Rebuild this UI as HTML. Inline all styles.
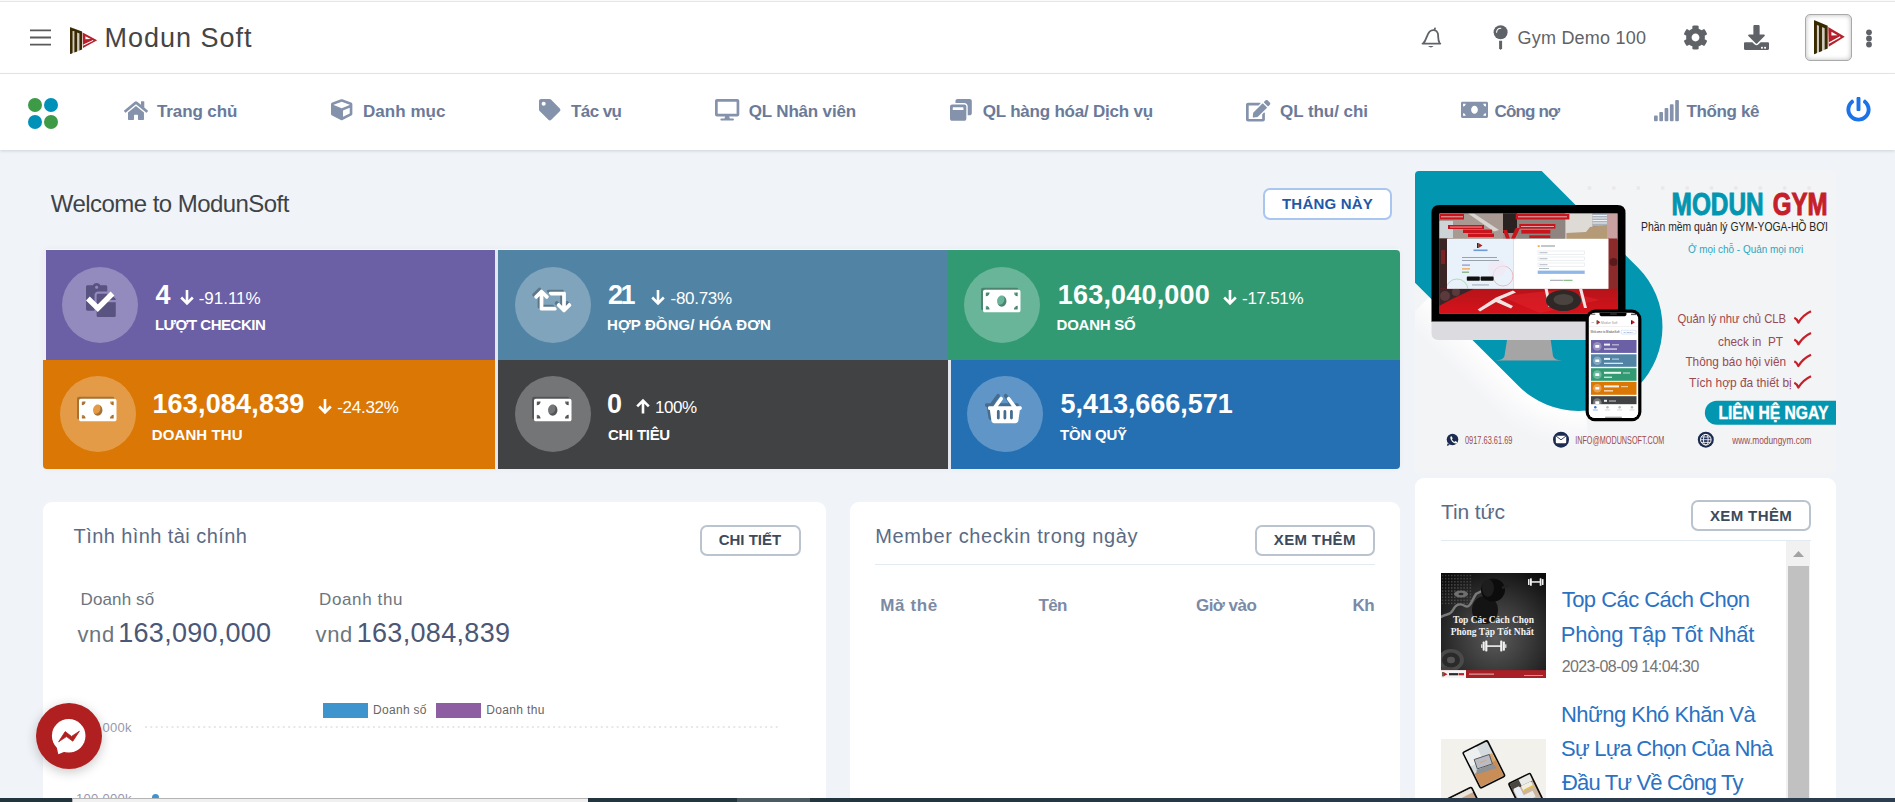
<!DOCTYPE html>
<html lang="vi">
<head>
<meta charset="utf-8">
<title>Modun Soft</title>
<style>
*{box-sizing:border-box;margin:0;padding:0}
html,body{width:1895px;height:802px;overflow:hidden}
body{position:relative;background:#f0f4f8;font-family:"Liberation Sans",Arial,sans-serif;color:#333}
.abs,.t{position:absolute}
.t{white-space:nowrap;display:block}
svg{position:absolute;overflow:visible}
header.topbar{position:absolute;left:0;top:0;width:1895px;height:74px;background:#fff;border-bottom:1px solid #e6e9ee}
header.topbar:before{content:"";position:absolute;left:0;top:0;width:100%;height:2px;background:linear-gradient(#fafafa 50%,#e6e6e6 50%)}
nav.menubar{position:absolute;left:0;top:74px;width:1895px;height:76px;background:#fff;box-shadow:0 1px 3px rgba(100,120,135,.26)}
.card{position:absolute;color:#fff}
.circle{position:absolute;width:76px;height:76px;border-radius:50%;background:rgba(255,255,255,.27)}
.panel{position:absolute;background:#fff;border-radius:9px}
.btn{position:absolute;height:31px;border:2px solid #b9c4ce;border-radius:7px;background:#fff}
.hr{position:absolute;height:1px;background:#e2eaf2}

</style>
</head>
<body>
<header class="topbar"><svg style="left:30px;top:29px" width="21" height="17" viewBox="0 0 21 17"><path d="M0 1.4h21M0 8.5h21M0 15.6h21" stroke="#5a5a5a" stroke-width="1.9" fill="none"/></svg><svg style="left:69.6px;top:27.0px" width="27.4" height="27.2" viewBox="0 0 27.4 27.2" preserveAspectRatio="none"><path fill="#cfcbc0" d="M2.5 4L9.6 6.5V23.5L2.5 26z"/><path fill="#3a2a02" d="M0 1.1Q0 0 1 .4L2.600 1V26L1 26.900Q0 27.300 0 26.200zM4.400 3.200L7.100 4.200V24.400L4.400 25.400zM9.400 5L12.100 6V22.400L9.400 23.500zM.5.200L12.100 4.500V7.400L.5 3.100z"/><path fill="#b5202a" d="M12.600 5.500L27.200 13.200 13 21.100z"/><path fill="#fff" d="M15.400 9.300L20.800 12 15.400 12.300zM13.300 18.700L23.400 13.700 23 12.900 13.300 17.600z"/></svg><svg style="left:1422px;top:27.5px" width="19" height="20.5" viewBox="0 0 19 20.5"><path d="M1.300 15.200C4.600 12.400 4.600 6.400 7.600 3.600 10.300 1.200 14.700 1.800 15.800 5.300 16.700 8.400 15.500 12 17.600 15.100M.5 15.600H18.300M12.600 2.300L13 .4" stroke="#5f6368" stroke-width="1.800" fill="none" stroke-linecap="round" stroke-linejoin="round"/><path d="M6 18q3 2.800 5.600 0z" fill="#5f6368"/></svg><svg style="left:1493px;top:25px" width="15" height="25" viewBox="0 0 15 25"><circle cx="7.600" cy="7.200" r="7" fill="#5f6368"/><path d="M3.600 7.300A4.300 4.300 0 0 1 7.800 3.200" stroke="#fff" stroke-width="1.100" fill="none" stroke-linecap="round"/><path d="M6.100 15.700h3v7.600l-1.500 1.600-1.500-1.600z" fill="#5f6368"/></svg><svg style="left:1682.7px;top:25.2px;" width="25.00" height="25" viewBox="0 0 512 512"><path fill="#5f6368" d="M487.4 315.7l-42.6-24.6c4.3-23.2 4.3-47 0-70.2l42.6-24.6c4.9-2.8 7.1-8.6 5.5-14-11.1-35.6-30-67.8-54.700-94.600-3.800-4.100-10-5.100-14.800-2.300L380.800 110c-17.900-15.400-38.500-27.300-60.800-35.100V25.800c0-5.600-3.900-10.500-9.400-11.700-36.700-8.200-74.300-7.800-109.200 0-5.500 1.200-9.400 6.100-9.400 11.700V75c-22.200 7.900-42.800 19.800-60.800 35.100L88.700 85.500c-4.900-2.800-11-1.900-14.800 2.300-24.700 26.700-43.600 58.900-54.700 94.600-1.700 5.400.6 11.200 5.500 14L67.300 221c-4.300 23.200-4.300 47 0 70.200l-42.600 24.600c-4.900 2.800-7.100 8.600-5.500 14 11.100 35.600 30 67.800 54.700 94.600 3.800 4.100 10 5.100 14.800 2.300l42.600-24.600c17.900 15.400 38.500 27.300 60.800 35.100v49.200c0 5.600 3.900 10.500 9.400 11.700 36.700 8.200 74.300 7.800 109.200 0 5.500-1.200 9.400-6.100 9.400-11.700v-49.200c22.200-7.900 42.800-19.800 60.800-35.100l42.600 24.600c4.900 2.800 11 1.900 14.800-2.300 24.700-26.700 43.600-58.900 54.700-94.600 1.500-5.500-.7-11.300-5.600-14.100zM256 336c-44.100 0-80-35.900-80-80s35.900-80 80-80 80 35.900 80 80-35.900 80-80 80z"/></svg><svg style="left:1743.5px;top:25.0px;" width="25.00" height="25" viewBox="0 0 512 512"><path fill="#5f6368" d="M216 0h80c13.300 0 24 10.700 24 24v168h87.700c17.800 0 26.700 21.500 14.100 34.100L269.700 378.300c-7.500 7.500-19.800 7.500-27.300 0L90.100 226.100c-12.600-12.600-3.700-34.100 14.100-34.100H192V24c0-13.300 10.700-24 24-24zm296 376v112c0 13.300-10.700 24-24 24H24c-13.300 0-24-10.700-24-24V376c0-13.300 10.700-24 24-24h146.700l49 49c20.100 20.100 52.500 20.100 72.600 0l49-49H488c13.300 0 24 10.700 24 24zm-124 88c0-11-9-20-20-20s-20 9-20 20 9 20 20 20 20-9 20-20zm64 0c0-11-9-20-20-20s-20 9-20 20 9 20 20 20 20-9 20-20z"/></svg><div class="abs" style="left:1805px;top:14px;width:47px;height:47px;border:1px solid #a9a9a9;border-radius:5px;background:#fff;box-shadow:inset 0 0 5px rgba(0,0,0,.28)"></div><svg style="left:1813.8px;top:19.8px" width="31.0" height="34.5" viewBox="0 0 27.4 27.2" preserveAspectRatio="none"><path fill="#cfcbc0" d="M2.5 4L9.6 6.5V23.5L2.5 26z"/><path fill="#3a2a02" d="M0 1.1Q0 0 1 .4L2.600 1V26L1 26.900Q0 27.300 0 26.200zM4.400 3.200L7.100 4.200V24.400L4.400 25.400zM9.400 5L12.100 6V22.400L9.400 23.500zM.5.200L12.100 4.500V7.400L.5 3.100z"/><path fill="#b5202a" d="M12.600 5.500L27.200 13.200 13 21.100z"/><path fill="#fff" d="M15.400 9.300L20.800 12 15.400 12.300zM13.300 18.700L23.400 13.700 23 12.900 13.300 17.600z"/></svg><svg style="left:1866px;top:29px" width="6" height="19" viewBox="0 0 6 19"><circle cx="3" cy="3.300" r="2.900" fill="#5f6368"/><circle cx="3" cy="9.400" r="2.900" fill="#5f6368"/><circle cx="3" cy="15.500" r="2.900" fill="#5f6368"/></svg><h1 class="t" style="left:104.5px;top:25px;font-size:27px;line-height:27px;font-weight:400;color:#454545;letter-spacing:0.99px;">Modun Soft</h1><span class="t" style="left:1517.5px;top:29px;font-size:18px;line-height:18px;font-weight:400;color:#5f6368;letter-spacing:0.22px;">Gym Demo 100</span></header><nav class="menubar"><i class="abs" style="left:28px;top:23.5px;width:14px;height:14px;border-radius:50%;background:#3d9a46"></i><i class="abs" style="left:43.5px;top:23.5px;width:14px;height:14px;border-radius:50%;background:#0091b9"></i><i class="abs" style="left:28px;top:41px;width:14px;height:14px;border-radius:50%;background:#0091b9"></i><i class="abs" style="left:43.5px;top:41px;width:14px;height:14px;border-radius:50%;background:#3d9a46"></i><a class="t" style="left:157px;top:29px;font-size:17px;line-height:17px;font-weight:700;color:#6b7a99;letter-spacing:-0.11px;">Trang chủ</a><a class="t" style="left:363px;top:29px;font-size:17px;line-height:17px;font-weight:700;color:#6b7a99;letter-spacing:0.04px;">Danh mục</a><a class="t" style="left:571px;top:29px;font-size:17px;line-height:17px;font-weight:700;color:#6b7a99;letter-spacing:-0.59px;">Tác vụ</a><a class="t" style="left:748.8px;top:29px;font-size:17px;line-height:17px;font-weight:700;color:#6b7a99;letter-spacing:-0.18px;">QL Nhân viên</a><a class="t" style="left:982.8px;top:29px;font-size:17px;line-height:17px;font-weight:700;color:#6b7a99;letter-spacing:-0.22px;">QL hàng hóa/ Dịch vụ</a><a class="t" style="left:1280px;top:29px;font-size:17px;line-height:17px;font-weight:700;color:#6b7a99;letter-spacing:-0.04px;">QL thu/ chi</a><a class="t" style="left:1494.5px;top:29px;font-size:17px;line-height:17px;font-weight:700;color:#6b7a99;letter-spacing:-0.84px;">Công nợ</a><a class="t" style="left:1686.6px;top:29px;font-size:17px;line-height:17px;font-weight:700;color:#6b7a99;letter-spacing:-0.39px;">Thống kê</a><svg style="left:124.0px;top:26.2px;" width="23.96" height="21.3" viewBox="0 0 576 512"><path fill="#8592ab" d="M280.37 148.26L96 300.11V464a16 16 0 0 0 16 16l112.06-.29a16 16 0 0 0 15.92-16V368a16 16 0 0 1 16-16h64a16 16 0 0 1 16 16v95.64a16 16 0 0 0 16 16.05L464 480a16 16 0 0 0 16-16V300L295.67 148.26a12.19 12.19 0 0 0-15.3 0zM571.6 251.47L488 182.56V44.05a12 12 0 0 0-12-12h-56a12 12 0 0 0-12 12v72.61L318.47 43a48 48 0 0 0-61 0L4.34 251.47a12 12 0 0 0-1.6 16.9l25.5 31A12 12 0 0 0 45.15 301l235.22-193.74a12.19 12.19 0 0 1 15.3 0L530.9 301a12 12 0 0 0 16.9-1.6l25.5-31a12 12 0 0 0-1.7-16.93z"/></svg><svg style="left:330.6px;top:25.2px;" width="21.40" height="21.4" viewBox="0 0 512 512"><path fill="#8592ab" d="M239.1 6.3l-208 78c-18.7 7-31.1 25-31.1 45v225.1c0 18.2 10.3 34.8 26.5 42.9l208 104c13.5 6.8 29.4 6.8 42.9 0l208-104c16.3-8.1 26.5-24.8 26.5-42.9V129.3c0-20-12.4-37.9-31.1-44.9l-208-78C262 2.2 250 2.2 239.1 6.3zM256 68.4l192 72v1.1l-192 78-192-78v-1.1l192-72zm32 356V275.5l160-65v133.9l-160 80z"/></svg><svg style="left:538.6px;top:25.4px;" width="21.40" height="21.4" viewBox="0 0 512 512"><path fill="#8592ab" d="M0 252.118V48C0 21.49 21.49 0 48 0h204.118a48 48 0 0 1 33.941 14.059l211.882 211.882c18.745 18.745 18.745 49.137 0 67.882L293.823 497.941c-18.745 18.745-49.137 18.745-67.882 0L14.059 286.059A48 48 0 0 1 0 252.118zM112 64c-26.51 0-48 21.49-48 48s21.49 48 48 48 48-21.49 48-48-21.49-48-48-48z"/></svg><svg style="left:714.6px;top:25.4px;" width="24.30" height="21.6" viewBox="0 0 576 512"><path fill="#8592ab" d="M528 0H48C21.5 0 0 21.5 0 48v320c0 26.5 21.5 48 48 48h192l-16 48h-72c-13.3 0-24 10.7-24 24s10.7 24 24 24h272c13.3 0 24-10.7 24-24s-10.7-24-24-24h-72l-16-48h192c26.5 0 48-21.5 48-48V48c0-26.5-21.5-48-48-48zm-16 352H64V64h448v288z"/></svg><svg style="left:949.8px;top:25.2px;" width="21.80" height="21.8" viewBox="0 0 512 512"><path fill="#8592ab" d="M512 48v288c0 26.5-21.5 48-48 48h-48V176c0-44.1-35.9-80-80-80H128V48c0-26.500 21.500-48 48-48h288c26.500 0 48 21.500 48 48zM384 176v288c0 26.500-21.500 48-48 48H48c-26.500 0-48-21.500-48-48V176c0-26.500 21.500-48 48-48h288c26.500 0 48 21.500 48 48zm-68 28c0-6.600-5.400-12-12-12H76c-6.600 0-12 5.400-12 12v52h252v-52z"/></svg><svg style="left:1246.0px;top:25.6px;" width="24.30" height="21.6" viewBox="0 0 576 512"><path fill="#8592ab" d="M402.600 83.200l90.200 90.200c3.800 3.800 3.800 10 0 13.800L274.400 405.600l-92.800 10.300c-12.400 1.400-22.900-9.100-21.500-21.500l10.300-92.800L388.800 83.200c3.800-3.800 10-3.800 13.800 0zm162-22.900l-48.800-48.800c-15.200-15.200-39.900-15.200-55.200 0l-35.400 35.400c-3.800 3.800-3.800 10 0 13.800l90.200 90.200c3.800 3.800 10 3.800 13.800 0l35.400-35.400c15.200-15.300 15.200-40 0-55.200zM384 346.200V448H64V128h229.800c3.200 0 6.200-1.300 8.500-3.500l40-40c7.600-7.600 2.200-20.500-8.500-20.500H48C21.500 64 0 85.500 0 112v352c0 26.500 21.500 48 48 48h352c26.500 0 48-21.500 48-48V306.200c0-10.700-12.900-16-20.500-8.500l-40 40c-2.200 2.300-3.500 5.300-3.500 8.500z"/></svg><svg style="left:1461.0px;top:25.3px;" width="27.00" height="21.6" viewBox="0 0 640 512"><path fill="#8592ab" d="M608 64H32C14.330 64 0 78.330 0 96v320c0 17.670 14.330 32 32 32h576c17.670 0 32-14.330 32-32V96c0-17.670-14.330-32-32-32zM48 400v-64c35.350 0 64 28.650 64 64H48zm0-224v-64h64c0 35.350-28.650 64-64 64zm272 176c-44.190 0-80-42.990-80-96 0-53.020 35.820-96 80-96s80 42.980 80 96c0 53.030-35.830 96-80 96zm272 48h-64c0-35.350 28.650-64 64-64v64zm0-224c-35.350 0-64-28.650-64-64h64v64z"/></svg><svg style="left:1846.2px;top:22.7px;" width="25.00" height="25" viewBox="0 0 512 512"><path fill="#1a73e8" d="M400 54.100c63 45 104 118.600 104 201.900 0 136.800-110.800 247.700-247.500 248C120 504.300 8.200 393 8 256.400 7.900 173.100 48.900 99.300 111.800 54.200c11.700-8.300 28-4.800 35 7.700L162.600 90c5.900 10.500 3.100 23.800-6.600 31-41.500 30.800-68 79.600-68 134.900-.1 92.300 74.500 168.100 168 168.100 91.600 0 168.600-74.200 168-169.100-.3-51.800-24.700-101.800-68.100-134-9.700-7.200-12.400-20.500-6.500-30.900l15.800-28.100c7-12.400 23.200-16.100 34.800-7.800zM296 264V24c0-13.300-10.700-24-24-24h-32c-13.300 0-24 10.700-24 24v240c0 13.300 10.700 24 24 24h32c13.300 0 24-10.700 24-24z"/></svg><svg style="left:1654px;top:25.600px" width="25" height="21.200" viewBox="0 0 25 21.200"><g fill="#8592ab"><rect x="0" y="15.600" width="3.700" height="5.600" rx=".9"/><rect x="5.300" y="11.900" width="3.700" height="9.300" rx=".9"/><rect x="10.600" y="7.900" width="3.700" height="13.300" rx=".9"/><rect x="15.900" y="4.200" width="3.700" height="17" rx=".9"/><rect x="21.200" y="0" width="3.700" height="21.200" rx=".9"/></g></svg></nav><h2 class="t" style="left:50.8px;top:192px;font-size:24px;line-height:24px;font-weight:400;color:#3f4347;letter-spacing:-0.55px;">Welcome to ModunSoft</h2><div class="btn" style="left:1263px;top:188px;width:129px;height:32px;border-color:#a9c6f0"></div><span class="t" style="left:1282px;top:196px;font-size:15px;line-height:15px;font-weight:700;color:#1d59a8;letter-spacing:0.19px;">THÁNG NÀY</span><div class="abs" style="left:43px;top:249px;width:1357px;height:220px;background:#e3e8ee;border-radius:4px;box-shadow:0 0 5px rgba(90,100,140,.06)"></div><i class="abs lavstrip" style="left:43px;top:249px;width:3px;height:111px;background:#efedf7;border-radius:4px 0 0 0"></i><i class="abs" style="left:46px;top:249px;width:1354px;height:1px;background:#f7f8fb"></i><div class="card" style="left:46px;top:250px;width:449px;height:110px;background:#6b5fa5;"><i class="circle" style="left:16.400000000000006px;top:17px"></i><svg style="left:39.8px;top:33.0px;" width="29.75" height="34" viewBox="0 0 448 512"><path fill="rgba(30,28,70,.5)" d="M128 184c0-30.879 25.122-56 56-56h136V56c0-13.255-10.745-24-24-24h-80.610C204.306 12.890 183.637 0 160 0s-44.306 12.890-55.390 32H24C10.745 32 0 42.745 0 56v336c0 13.255 10.745 24 24 24h104V184zm32-144c13.255 0 24 10.745 24 24s-10.745 24-24 24-24-10.745-24-24 10.745-24 24-24zm184 248h104v200c0 13.255-10.745 24-24 24H184c-13.255 0-24-10.745-24-24V184c0-13.255 10.745-24 24-24h136v104c0 13.200 10.800 24 24 24zm104-38.059V256h-96v-96h6.059a24 24 0 0 1 16.970 7.029l65.941 65.941a24.002 24.002 0 0 1 7.030 16.971z"/></svg><svg style="left:38.400000000000006px;top:40px" width="32" height="24" viewBox="0 0 32 24"><path d="M3.900 8.500L13.800 18.200 28.500 3.500" stroke="#fff" stroke-width="5.400" fill="none"/></svg><b class="t" style="left:109.4px;top:32px;font-size:27px;line-height:27px;font-weight:700;color:#fff;letter-spacing:0px;">4</b><span class="t" style="left:152.7px;top:40px;font-size:17px;line-height:17px;font-weight:400;color:#fff;letter-spacing:-0.02px;">-91.11%</span><svg style="left:133.7px;top:39.69999999999999px" width="14" height="15" viewBox="0 0 14 15"><path d="M7 0v13M1.200 7.500l5.800 5.800 5.800-5.800" stroke="#fff" stroke-width="2.600" fill="none"/></svg><span class="t" style="left:108.9px;top:67px;font-size:15px;line-height:15px;font-weight:700;color:#fff;letter-spacing:-0.47px;">LƯỢT CHECKIN</span></div><div class="card" style="left:498px;top:250px;width:450px;height:110px;background:#5083a4;"><i class="circle" style="left:17px;top:17px"></i><svg style="left:34.2px;top:34.0px;" width="37.50" height="30" viewBox="0 0 640 512"><path fill="rgba(0,0,0,.27)" d="M629.657 343.598L528.971 444.284c-9.373 9.372-24.568 9.372-33.941 0L394.343 343.598c-9.373-9.373-9.373-24.569 0-33.941l10.823-10.823c9.562-9.562 25.133-9.340 34.419.492L480 342.118V160H292.451a24.005 24.005 0 0 1-16.971-7.029l-16-16C244.361 121.851 255.069 96 276.451 96H520c13.255 0 24 10.745 24 24v222.118l40.416-42.792c9.285-9.831 24.856-10.054 34.419-.492l10.823 10.823c9.372 9.372 9.372 24.569-.001 33.941zm-265.138 15.431A23.999 23.999 0 0 0 347.548 352H160V169.881l40.416 42.792c9.286 9.831 24.856 10.054 34.419.491l10.822-10.822c9.373-9.373 9.373-24.569 0-33.941L144.971 67.716c-9.373-9.373-24.569-9.373-33.941 0L10.343 168.402c-9.373 9.373-9.373 24.569 0 33.941l10.822 10.822c9.562 9.562 25.133 9.340 34.419-.491L96 169.881V392c0 13.255 10.745 24 24 24h243.549c21.382 0 32.090-25.851 16.971-40.971l-16.001-16z"/></svg><svg style="left:36.2px;top:36.0px;" width="37.50" height="30" viewBox="0 0 640 512"><path fill="#fff" d="M629.657 343.598L528.971 444.284c-9.373 9.372-24.568 9.372-33.941 0L394.343 343.598c-9.373-9.373-9.373-24.569 0-33.941l10.823-10.823c9.562-9.562 25.133-9.340 34.419.492L480 342.118V160H292.451a24.005 24.005 0 0 1-16.971-7.029l-16-16C244.361 121.851 255.069 96 276.451 96H520c13.255 0 24 10.745 24 24v222.118l40.416-42.792c9.285-9.831 24.856-10.054 34.419-.492l10.823 10.823c9.372 9.372 9.372 24.569-.001 33.941zm-265.138 15.431A23.999 23.999 0 0 0 347.548 352H160V169.881l40.416 42.792c9.286 9.831 24.856 10.054 34.419.491l10.822-10.822c9.373-9.373 9.373-24.569 0-33.941L144.971 67.716c-9.373-9.373-24.569-9.373-33.941 0L10.343 168.402c-9.373 9.373-9.373 24.569 0 33.941l10.822 10.822c9.562 9.562 25.133 9.340 34.419-.491L96 169.881V392c0 13.255 10.745 24 24 24h243.549c21.382 0 32.090-25.851 16.971-40.971l-16.001-16z"/></svg><b class="t" style="left:110px;top:32px;font-size:27px;line-height:27px;font-weight:700;color:#fff;letter-spacing:-2.42px;">21</b><span class="t" style="left:172.6px;top:40px;font-size:17px;line-height:17px;font-weight:400;color:#fff;letter-spacing:-0.3px;">-80.73%</span><svg style="left:153.29999999999995px;top:39.69999999999999px" width="14" height="15" viewBox="0 0 14 15"><path d="M7 0v13M1.200 7.500l5.800 5.800 5.800-5.800" stroke="#fff" stroke-width="2.600" fill="none"/></svg><span class="t" style="left:109px;top:67px;font-size:15px;line-height:15px;font-weight:700;color:#fff;letter-spacing:0.1px;">HỢP ĐỒNG/ HÓA ĐƠN</span></div><div class="card" style="left:948px;top:250px;width:452px;height:110px;background:#329a73;border-radius:0 4px 0 0"><i class="circle" style="left:16px;top:17px"></i><svg style="left:33.2px;top:34.0px;" width="37.50" height="30" viewBox="0 0 640 512"><path fill="rgba(0,0,0,.27)" d="M608 64H32C14.330 64 0 78.330 0 96v320c0 17.670 14.330 32 32 32h576c17.670 0 32-14.330 32-32V96c0-17.670-14.330-32-32-32zM48 400v-64c35.350 0 64 28.650 64 64H48zm0-224v-64h64c0 35.350-28.650 64-64 64zm272 176c-44.190 0-80-42.990-80-96 0-53.020 35.820-96 80-96s80 42.980 80 96c0 53.030-35.830 96-80 96zm272 48h-64c0-35.350 28.650-64 64-64v64zm0-224c-35.350 0-64-28.650-64-64h64v64z"/></svg><svg style="left:35.2px;top:36.0px;" width="37.50" height="30" viewBox="0 0 640 512"><path fill="#fff" d="M608 64H32C14.330 64 0 78.330 0 96v320c0 17.670 14.330 32 32 32h576c17.670 0 32-14.330 32-32V96c0-17.670-14.330-32-32-32zM48 400v-64c35.350 0 64 28.650 64 64H48zm0-224v-64h64c0 35.350-28.650 64-64 64zm272 176c-44.190 0-80-42.990-80-96 0-53.020 35.820-96 80-96s80 42.980 80 96c0 53.030-35.830 96-80 96zm272 48h-64c0-35.350 28.650-64 64-64v64zm0-224c-35.350 0-64-28.650-64-64h64v64z"/></svg><b class="t" style="left:109.8px;top:32px;font-size:27px;line-height:27px;font-weight:700;color:#fff;letter-spacing:0.18px;">163,040,000</b><span class="t" style="left:294px;top:40px;font-size:17px;line-height:17px;font-weight:400;color:#fff;letter-spacing:-0.28px;">-17.51%</span><svg style="left:275px;top:39.69999999999999px" width="14" height="15" viewBox="0 0 14 15"><path d="M7 0v13M1.200 7.500l5.800 5.800 5.800-5.800" stroke="#fff" stroke-width="2.600" fill="none"/></svg><span class="t" style="left:108.6px;top:67px;font-size:15px;line-height:15px;font-weight:700;color:#fff;letter-spacing:-0.25px;">DOANH SỐ</span></div><div class="card" style="left:43px;top:360px;width:452px;height:109px;background:#db7704;border-radius:0 0 0 4px"><i class="circle" style="left:16.5px;top:16px"></i><svg style="left:33.8px;top:33.0px;" width="37.50" height="30" viewBox="0 0 640 512"><path fill="rgba(0,0,0,.27)" d="M608 64H32C14.330 64 0 78.330 0 96v320c0 17.670 14.330 32 32 32h576c17.670 0 32-14.330 32-32V96c0-17.670-14.330-32-32-32zM48 400v-64c35.350 0 64 28.650 64 64H48zm0-224v-64h64c0 35.350-28.650 64-64 64zm272 176c-44.190 0-80-42.990-80-96 0-53.020 35.820-96 80-96s80 42.980 80 96c0 53.030-35.830 96-80 96zm272 48h-64c0-35.350 28.650-64 64-64v64zm0-224c-35.350 0-64-28.650-64-64h64v64z"/></svg><svg style="left:35.8px;top:35.0px;" width="37.50" height="30" viewBox="0 0 640 512"><path fill="#fff" d="M608 64H32C14.330 64 0 78.330 0 96v320c0 17.670 14.330 32 32 32h576c17.670 0 32-14.330 32-32V96c0-17.670-14.330-32-32-32zM48 400v-64c35.350 0 64 28.650 64 64H48zm0-224v-64h64c0 35.350-28.650 64-64 64zm272 176c-44.190 0-80-42.990-80-96 0-53.020 35.820-96 80-96s80 42.980 80 96c0 53.030-35.830 96-80 96zm272 48h-64c0-35.350 28.650-64 64-64v64zm0-224c-35.350 0-64-28.650-64-64h64v64z"/></svg><b class="t" style="left:109.4px;top:31px;font-size:27px;line-height:27px;font-weight:700;color:#fff;letter-spacing:0.18px;">163,084,839</b><span class="t" style="left:294.2px;top:39px;font-size:17px;line-height:17px;font-weight:400;color:#fff;letter-spacing:-0.27px;">-24.32%</span><svg style="left:275.2px;top:38.80000000000001px" width="14" height="15" viewBox="0 0 14 15"><path d="M7 0v13M1.200 7.500l5.800 5.800 5.800-5.800" stroke="#fff" stroke-width="2.600" fill="none"/></svg><span class="t" style="left:108.8px;top:67px;font-size:15px;line-height:15px;font-weight:700;color:#fff;letter-spacing:0.1px;">DOANH THU</span></div><div class="card" style="left:498px;top:360px;width:450px;height:109px;background:#414244;"><i class="circle" style="left:17px;top:16px"></i><svg style="left:34.2px;top:33.0px;" width="37.50" height="30" viewBox="0 0 640 512"><path fill="rgba(0,0,0,.27)" d="M608 64H32C14.330 64 0 78.330 0 96v320c0 17.670 14.330 32 32 32h576c17.670 0 32-14.330 32-32V96c0-17.670-14.330-32-32-32zM48 400v-64c35.350 0 64 28.650 64 64H48zm0-224v-64h64c0 35.350-28.650 64-64 64zm272 176c-44.190 0-80-42.990-80-96 0-53.020 35.820-96 80-96s80 42.980 80 96c0 53.030-35.830 96-80 96zm272 48h-64c0-35.350 28.650-64 64-64v64zm0-224c-35.350 0-64-28.650-64-64h64v64z"/></svg><svg style="left:36.2px;top:35.0px;" width="37.50" height="30" viewBox="0 0 640 512"><path fill="#fff" d="M608 64H32C14.330 64 0 78.330 0 96v320c0 17.670 14.330 32 32 32h576c17.670 0 32-14.330 32-32V96c0-17.670-14.330-32-32-32zM48 400v-64c35.350 0 64 28.650 64 64H48zm0-224v-64h64c0 35.350-28.650 64-64 64zm272 176c-44.190 0-80-42.990-80-96 0-53.020 35.820-96 80-96s80 42.980 80 96c0 53.030-35.830 96-80 96zm272 48h-64c0-35.350 28.650-64 64-64v64zm0-224c-35.350 0-64-28.650-64-64h64v64z"/></svg><b class="t" style="left:109px;top:31px;font-size:27px;line-height:27px;font-weight:700;color:#fff;letter-spacing:0px;">0</b><span class="t" style="left:157px;top:39px;font-size:17px;line-height:17px;font-weight:400;color:#fff;letter-spacing:-0.45px;">100%</span><svg style="left:138px;top:38.80000000000001px" width="14" height="15" viewBox="0 0 14 15"><path d="M7 14.500V1.500M1.200 7.300l5.800-5.800 5.800 5.800" stroke="#fff" stroke-width="2.600" fill="none"/></svg><span class="t" style="left:110px;top:67px;font-size:15px;line-height:15px;font-weight:700;color:#fff;letter-spacing:-0.28px;">CHI TIÊU</span></div><div class="card" style="left:951px;top:360px;width:449px;height:109px;background:#2470b3;border-radius:0 0 4px 0"><i class="circle" style="left:16px;top:16px"></i><svg style="left:34.1px;top:32.0px;" width="33.75" height="30" viewBox="0 0 576 512"><path fill="rgba(0,0,0,.27)" d="M576 216v16c0 13.255-10.745 24-24 24h-8l-26.113 182.788C514.509 462.435 494.257 480 470.370 480H105.630c-23.887 0-44.139-17.565-47.518-41.212L32 256h-8c-13.255 0-24-10.745-24-24v-16c0-13.255 10.745-24 24-24h67.341l106.780-146.821c10.395-14.292 30.407-17.453 44.701-7.058 14.293 10.395 17.453 30.408 7.058 44.701L170.477 192h235.046L326.120 82.821c-10.395-14.292-7.234-34.306 7.059-44.701 14.291-10.395 34.306-7.235 44.701 7.058L484.659 192H552c13.255 0 24 10.745 24 24zM312 392V280c0-13.255-10.745-24-24-24s-24 10.745-24 24v112c0 13.255 10.745 24 24 24s24-10.745 24-24zm112 0V280c0-13.255-10.745-24-24-24s-24 10.745-24 24v112c0 13.255 10.745 24 24 24s24-10.745 24-24zm-224 0V280c0-13.255-10.745-24-24-24s-24 10.745-24 24v112c0 13.255 10.745 24 24 24s24-10.745 24-24z"/></svg><svg style="left:37.1px;top:35.0px;" width="33.75" height="30" viewBox="0 0 576 512"><path fill="#fff" d="M576 216v16c0 13.255-10.745 24-24 24h-8l-26.113 182.788C514.509 462.435 494.257 480 470.370 480H105.630c-23.887 0-44.139-17.565-47.518-41.212L32 256h-8c-13.255 0-24-10.745-24-24v-16c0-13.255 10.745-24 24-24h67.341l106.780-146.821c10.395-14.292 30.407-17.453 44.701-7.058 14.293 10.395 17.453 30.408 7.058 44.701L170.477 192h235.046L326.120 82.821c-10.395-14.292-7.234-34.306 7.059-44.701 14.291-10.395 34.306-7.235 44.701 7.058L484.659 192H552c13.255 0 24 10.745 24 24zM312 392V280c0-13.255-10.745-24-24-24s-24 10.745-24 24v112c0 13.255 10.745 24 24 24s24-10.745 24-24zm112 0V280c0-13.255-10.745-24-24-24s-24 10.745-24 24v112c0 13.255 10.745 24 24 24s24-10.745 24-24zm-224 0V280c0-13.255-10.745-24-24-24s-24 10.745-24 24v112c0 13.255 10.745 24 24 24s24-10.745 24-24z"/></svg><b class="t" style="left:109.6px;top:31px;font-size:27px;line-height:27px;font-weight:700;color:#fff;letter-spacing:-0.05px;">5,413,666,571</b><span class="t" style="left:109px;top:67px;font-size:15px;line-height:15px;font-weight:700;color:#fff;letter-spacing:-0.22px;">TỒN QUỸ</span></div><aside class="abs" style="left:1415px;top:171px;width:421px;height:302px"><svg style="left:0;top:0" width="421" height="302" viewBox="1415 171 421 302" font-family="Liberation Sans, Arial, sans-serif"><defs><clipPath id="bclip"><path d="M1415 175Q1415 171 1419 171H1836V473H1415z"/></clipPath><clipPath id="scr"><rect x="1439.500" y="213.500" width="178" height="100.200"/></clipPath><clipPath id="dlg"><rect x="1447" y="238.800" width="161.500" height="50"/></clipPath><clipPath id="phs"><rect x="1588.800" y="312.800" width="49.400" height="105.300" rx="6"/></clipPath><linearGradient id="glowL" gradientUnits="userSpaceOnUse" x1="1473.800" y1="340" x2="1447.800" y2="366"><stop offset="0" stop-color="#fff" stop-opacity="1"/><stop offset=".5" stop-color="#fff" stop-opacity=".45"/><stop offset="1" stop-color="#fff" stop-opacity="0"/></linearGradient><radialGradient id="glowR" gradientUnits="userSpaceOnUse" cx="1578.500" cy="327" r="121"><stop offset=".694" stop-color="#fff" stop-opacity="1"/><stop offset=".85" stop-color="#fff" stop-opacity=".4"/><stop offset="1" stop-color="#fff" stop-opacity="0"/></radialGradient><linearGradient id="gfloor" x1="0" y1="0" x2="0" y2="1"><stop offset="0" stop-color="#b5141a"/><stop offset="1" stop-color="#d8121a"/></linearGradient><linearGradient id="gceil" x1="0" y1="0" x2="0" y2="1"><stop offset="0" stop-color="#7d5a55"/><stop offset="1" stop-color="#5a2a2a"/></linearGradient></defs><g clip-path="url(#bclip)"><rect x="1415" y="171" width="421" height="302" fill="#f3f4f6"/><path d="M1430 296.200L1519.100 386.400 1493.100 412.400 1404 322.200z" fill="url(#glowL)"/><path d="M1519.100 386.400L1493.100 412.400A121 121 0 0 0 1589 447.500L1585.800 410.700A84 84 0 0 1 1519.100 386.400z" fill="url(#glowR)"/><path d="M1415 171H1541.700L1637.900 267.600A84 84 0 0 1 1519.100 386.400L1415 282.700z" fill="#0396b1"/><g fill="#e9dfe6" opacity=".6"><circle cx="1589.5" cy="188" r="2"/><circle cx="1613.9" cy="188" r="2"/><circle cx="1638.3" cy="188" r="2"/><circle cx="1662.7" cy="188" r="2"/><circle cx="1687.1" cy="188" r="2"/><circle cx="1711.5" cy="188" r="2"/><circle cx="1735.9" cy="188" r="2"/><circle cx="1760.3" cy="188" r="2"/><circle cx="1784.7" cy="188" r="2"/><circle cx="1809.1" cy="188" r="2"/></g><path d="M1431.500 213Q1431.500 205 1439.500 205H1617.500Q1625.500 205 1625.500 213V322H1431.500z" fill="#000"/><path d="M1431.500 321.500H1625.500V333Q1625.500 340 1618.500 340H1438.500Q1431.500 340 1431.500 333z" fill="#dcdbe0"/><path d="M1507 340H1550.700L1553 356Q1554 360 1562 360.600H1495.500Q1503.500 360 1504.500 356z" fill="#a5a5a5"/><g clip-path="url(#scr)"><rect x="1439" y="213" width="179" height="101" fill="#9c8d86"/><rect x="1439" y="213" width="64" height="26" fill="#a89a93"/><rect x="1439" y="221" width="14" height="17" fill="#cdd4d8"/><rect x="1503" y="213" width="14" height="20" fill="#2a2220"/><rect x="1517" y="213" width="49" height="26" fill="#8f8580"/><rect x="1565.400" y="213" width="27.200" height="26" fill="#dedad6"/><rect x="1592.500" y="213" width="14.500" height="13" fill="#aab3bd"/><path d="M1592.500 215.500h14.500M1592.500 218h14.500M1592.500 220.500h14.500M1592.500 223h14.500" stroke="#eef0f2" stroke-width="1"/><path d="M1566.400 233L1586 232 1590 227 1607 225V239H1566.400z" fill="#b49a77"/><rect x="1607" y="213" width="11" height="27" fill="#c9a1a0"/><path d="M1468 213.500L1474 213.500 1499 230 1494 231.500z" fill="#d8d4d0"/><g fill="#c8151d"><rect x="1515.700" y="214" width="53.700" height="5.500"/><rect x="1519.300" y="224" width="36.100" height="4.600"/><rect x="1521.300" y="230" width="29" height="3.600"/><rect x="1529.300" y="235.300" width="21" height="2.700"/><rect x="1440" y="214" width="24" height="5.500"/><rect x="1448" y="225" width="36" height="4"/><rect x="1463" y="229.600" width="29" height="3.400"/><rect x="1468" y="233.600" width="26" height="3.400"/><path d="M1503 230L1507 230 1510 238.800H1506zM1520 228L1515.500 228 1511 238.800H1515z"/></g><g fill="#f3e4e4" opacity=".75"><rect x="1518" y="216.300" width="49" height="1"/><rect x="1521" y="226" width="33" height=".9"/><rect x="1450" y="226.600" width="32" height=".9"/><rect x="1441" y="216.300" width="22" height="1"/></g><rect x="1439" y="238.500" width="8.500" height="51" fill="#3b2424"/><rect x="1608" y="238.500" width="10" height="51" fill="#8a2a2a"/><circle cx="1613.500" cy="262" r="4" fill="#5a1a1c"/><rect x="1441" y="250" width="4" height="14" fill="#7a2226"/><rect x="1439" y="288.700" width="179" height="26" fill="url(#gfloor)"/><path d="M1439 288.700H1474L1452 299 1439 306z" fill="#3a2628"/><path d="M1440 296a5 5 0 1 0 10 0a5 5 0 1 0-10 0M1452 292a4 4 0 1 0 8 0a4 4 0 1 0-8 0" fill="#5b3a3c"/><path d="M1500 296L1560 290 1600 300 1540 313z" fill="#e4222b" opacity=".55"/><path d="M1477.600 309.500L1496 297.500 1513 290.500 1516 292.500 1500 299.500 1513 306 1511 308.500 1496 302 1480 311.500z" fill="#f3e2e2"/><path d="M1544.500 288.700h3.200L1551.500 307h-3zM1579 288.700h3.200L1587 308h-3z" fill="#f0e4e4"/><ellipse cx="1563.500" cy="300.500" rx="17.500" ry="10.500" fill="#2e2826"/><ellipse cx="1563.500" cy="299.500" rx="10" ry="5.500" fill="#4a4340"/><rect x="1447" y="238.800" width="66.700" height="50" fill="#e9f1fb"/><rect x="1513.700" y="238.800" width="94.800" height="50" fill="#fff"/><g clip-path="url(#dlg)"><circle cx="1457" cy="290" r="11" fill="none" stroke="#7cc47c" stroke-width=".5"/><circle cx="1503" cy="276" r="10" fill="none" stroke="#e98a8a" stroke-width=".5"/><circle cx="1497" cy="268" r="9" fill="#f1e8f3" opacity=".6"/></g><path d="M1478.500 243L1482.500 245.500 1478.500 248z" fill="#b5202a"/><rect x="1477" y="243" width="1.500" height="5" fill="#3a2a02"/><rect x="1473.500" y="249.500" width="14" height="1.600" fill="#6c9bd8"/><rect x="1462" y="257" width="35" height="1" fill="#9aa3ad"/><rect x="1462" y="260" width="37" height="1" fill="#9aa3ad"/><rect x="1462" y="264.500" width="8" height="1.200" fill="#8b93c9"/><rect x="1462" y="268.300" width="8" height="1.200" fill="#f0a03a"/><rect x="1462" y="271.600" width="7" height="1.200" fill="#7aa77a"/><rect x="1466.800" y="276.600" width="13" height="4.200" rx=".8" fill="#111"/><rect x="1480.600" y="276.600" width="13" height="4.200" rx=".8" fill="#111"/><rect x="1472" y="284.500" width="17" height=".9" fill="#9aa3ad"/><rect x="1537.700" y="245.300" width="2" height="1.600" fill="#f0a03a"/><rect x="1541" y="245.400" width="14" height="1.200" fill="#9aa3ad"/><rect x="1538" y="251" width="46.500" height="3.600" fill="#fff" stroke="#d9dde2" stroke-width=".5"/><rect x="1539.500" y="252.3" width="8" height=".9" fill="#aab1b9"/><rect x="1538" y="257" width="46.500" height="3.600" fill="#fff" stroke="#d9dde2" stroke-width=".5"/><rect x="1539.500" y="258.3" width="8" height=".9" fill="#aab1b9"/><rect x="1538" y="263" width="46.500" height="3.600" fill="#fff" stroke="#d9dde2" stroke-width=".5"/><rect x="1539.500" y="264.3" width="8" height=".9" fill="#aab1b9"/><rect x="1539" y="268" width="10" height=".9" fill="#aab1b9"/><rect x="1537.700" y="270.600" width="47" height="3.300" fill="#8fb8e8"/><rect x="1550" y="279.800" width="13" height=".9" fill="#8c949c"/><rect x="1563.500" y="279.800" width="9" height=".9" fill="#5aa65a"/></g><rect x="1585.600" y="309.600" width="55.800" height="111.700" rx="9.500" fill="#000"/><rect x="1588.800" y="312.800" width="49.400" height="105.300" rx="6.200" fill="#fff"/><g clip-path="url(#phs)"><path d="M1599.500 312H1626.500V314Q1626.500 316.300 1623.500 316.300H1602.500Q1599.500 316.300 1599.500 314z" fill="#000"/><rect x="1610" y="313.600" width="7" height=".9" rx=".4" fill="#444"/><rect x="1590.800" y="313.700" width="4.500" height="1.200" fill="#777"/><rect x="1631" y="313.700" width="5" height="1.400" fill="#555"/><path d="M1591.500 322.500h2.600" stroke="#999" stroke-width=".6"/><path d="M1597.500 320.300L1600.300 322.300 1597.500 324.300z" fill="#b5202a"/><rect x="1596.600" y="320.300" width="1" height="4" fill="#3a2a02"/><text x="1601" y="324" font-size="4.200" fill="#9a9a9a" textLength="16.500" lengthAdjust="spacingAndGlyphs">Modun Soft</text><path d="M1632 320.300L1635 322.300 1632 324.300z" fill="#b5202a"/><rect x="1631" y="320.300" width="1" height="4" fill="#3a2a02"/><rect x="1588.800" y="326.500" width="49.400" height=".5" fill="#e4e4e4"/><text x="1590.600" y="333" font-size="2.900" fill="#444" textLength="29" lengthAdjust="spacingAndGlyphs">Welcome to ModunSoft</text><rect x="1621.200" y="330.300" width="14.800" height="3.700" rx=".8" fill="#fff" stroke="#a3c2ee" stroke-width=".4"/><text x="1623.500" y="333.100" font-size="2.200" fill="#1d59a8" textLength="10" lengthAdjust="spacingAndGlyphs">THÁNG NÀY</text><rect x="1591" y="340" width="45.500" height="12.9" fill="#6b5fa5"/><circle cx="1597.300" cy="346.4" r="4.300" fill="#fff" opacity=".3"/><rect x="1595.300" y="345.1" width="4" height="2.600" rx=".5" fill="#fff"/><rect x="1604" y="343.6" width="6" height="2" fill="#fff" opacity=".9"/><rect x="1612" y="344.2" width="7" height="1.200" fill="#fff" opacity=".6"/><rect x="1604" y="348.4" width="13" height="1.300" fill="#fff" opacity=".8"/><rect x="1591" y="354.3" width="45.500" height="12.5" fill="#5083a4"/><circle cx="1597.300" cy="360.7" r="4.300" fill="#fff" opacity=".3"/><rect x="1595.300" y="359.4" width="4" height="2.600" rx=".5" fill="#fff"/><rect x="1604" y="357.9" width="6" height="2" fill="#fff" opacity=".9"/><rect x="1612" y="358.5" width="7" height="1.200" fill="#fff" opacity=".6"/><rect x="1604" y="362.7" width="19" height="1.300" fill="#fff" opacity=".8"/><rect x="1591" y="368.2" width="45.500" height="12.6" fill="#329a73"/><circle cx="1597.300" cy="374.6" r="4.300" fill="#fff" opacity=".3"/><rect x="1595.300" y="373.3" width="4" height="2.600" rx=".5" fill="#fff"/><rect x="1604" y="371.8" width="17" height="2" fill="#fff" opacity=".9"/><rect x="1623" y="372.4" width="7" height="1.200" fill="#fff" opacity=".6"/><rect x="1604" y="376.6" width="8" height="1.300" fill="#fff" opacity=".8"/><rect x="1591" y="381.8" width="45.500" height="13.0" fill="#db7704"/><circle cx="1597.300" cy="388.2" r="4.300" fill="#fff" opacity=".3"/><rect x="1595.300" y="386.9" width="4" height="2.600" rx=".5" fill="#fff"/><rect x="1604" y="385.4" width="15" height="2" fill="#fff" opacity=".9"/><rect x="1621" y="386.0" width="7" height="1.200" fill="#fff" opacity=".6"/><rect x="1604" y="390.2" width="9" height="1.300" fill="#fff" opacity=".8"/><rect x="1591" y="396.2" width="45.500" height="8.8" fill="#414244"/><circle cx="1597.300" cy="402.6" r="4.300" fill="#fff" opacity=".3"/><rect x="1595.300" y="401.3" width="4" height="2.600" rx=".5" fill="#fff"/><rect x="1604" y="399.8" width="3" height="2" fill="#fff" opacity=".9"/><rect x="1609" y="400.4" width="7" height="1.200" fill="#fff" opacity=".6"/><rect x="1588.800" y="404.200" width="49.400" height="14" fill="#fff"/><circle cx="1595.3" cy="407.300" r="1.200" fill="#2a72e8"/><rect x="1592.8" y="409.600" width="5" height=".8" fill="#7aa6ee"/><circle cx="1607.5" cy="407.300" r="1.200" fill="#b9b9b9"/><rect x="1605.0" y="409.600" width="5" height=".8" fill="#cfcfcf"/><circle cx="1619.6" cy="407.300" r="1.200" fill="#b9b9b9"/><rect x="1617.1" y="409.600" width="5" height=".8" fill="#cfcfcf"/><circle cx="1632" cy="407.300" r="1.200" fill="#b9b9b9"/><rect x="1629.5" y="409.600" width="5" height=".8" fill="#cfcfcf"/><rect x="1605" y="416.800" width="17" height="1" rx=".5" fill="#888"/></g><text x="1671.6" y="214.5" font-size="31.4" font-weight="700" fill="#0396b1" textLength="92.1" lengthAdjust="spacingAndGlyphs" stroke="#0396b1" stroke-width="1">MODUN</text><text x="1772.7" y="214.5" font-size="31.4" font-weight="700" fill="#c5202a" textLength="54.8" lengthAdjust="spacingAndGlyphs" stroke="#c5202a" stroke-width="1">GYM</text><text x="1641.1" y="231.4" font-size="12" font-weight="400" fill="#262626" textLength="186.9" lengthAdjust="spacingAndGlyphs">Phần mềm quản lý GYM-YOGA-HỒ BƠI</text><text x="1688.0" y="252.8" font-size="11.2" font-weight="400" fill="#2ba6c0" textLength="115.1" lengthAdjust="spacingAndGlyphs">Ở mọi chỗ - Quản mọi nơi</text><text x="1677.5" y="323.0" font-size="13.1" font-weight="400" fill="#9a4a50" textLength="108.6" lengthAdjust="spacingAndGlyphs">Quản lý như chủ CLB</text><text x="1718.0" y="346.3" font-size="13.1" font-weight="400" fill="#9a4a50" textLength="65.1" lengthAdjust="spacingAndGlyphs" xml:space="preserve">check in  PT</text><text x="1685.4" y="365.8" font-size="13.1" font-weight="400" fill="#9a4a50" textLength="100.7" lengthAdjust="spacingAndGlyphs">Thông báo hội viên</text><text x="1689.0" y="386.8" font-size="13.1" font-weight="400" fill="#9a4a50" textLength="102.7" lengthAdjust="spacingAndGlyphs">Tích hợp đa thiết bị</text><path d="M1794.300 317.8Q1797 319.0 1798.400 322.6Q1803 315.0 1811 311.3" fill="none" stroke="#c5202a" stroke-width="2.300" stroke-linejoin="round"/><path d="M1794.300 339.5Q1797 340.7 1798.400 344.3Q1803 336.7 1811 333.0" fill="none" stroke="#c5202a" stroke-width="2.300" stroke-linejoin="round"/><path d="M1794.300 361.2Q1797 362.4 1798.400 366.0Q1803 358.4 1811 354.7" fill="none" stroke="#c5202a" stroke-width="2.300" stroke-linejoin="round"/><path d="M1794.300 382.7Q1797 383.9 1798.400 387.5Q1803 379.9 1811 376.2" fill="none" stroke="#c5202a" stroke-width="2.300" stroke-linejoin="round"/><path d="M1716.800 400.800H1836V424.700H1716.800A11.950 11.950 0 0 1 1716.800 400.800z" fill="#0396b1"/><text x="1718.4" y="419.3" font-size="17.6" font-weight="700" fill="#fff" textLength="110.0" lengthAdjust="spacingAndGlyphs" stroke="#fff" stroke-width="0.4">LIÊN HỆ NGAY</text><circle cx="1452.500" cy="439.500" r="5.800" fill="#1c2b50"/><path d="M1447.500 443.500L1447 446 1450 444.800z" fill="#1c2b50"/><path d="M1450.300 436.800l1.400-.5 1 2.100-.9.900q.9 1.800 2.500 2.600l.9-.9 2.100 1-.5 1.400q-2.500.6-4.700-1.700t-1.800-4.900z" fill="#fff"/><text x="1464.9" y="443.7" font-size="10.3" font-weight="400" fill="#9a4a50" textLength="47.6" lengthAdjust="spacingAndGlyphs">0917.63.61.69</text><circle cx="1561" cy="439.700" r="8" fill="#1c2b50"/><rect x="1555.800" y="435.700" width="10.400" height="7.600" rx="1" fill="#fff"/><path d="M1556 436l5 3.800 5-3.800" stroke="#1c2b50" stroke-width=".9" fill="none"/><text x="1575.2" y="443.7" font-size="10.3" font-weight="400" fill="#9a4a50" textLength="89.2" lengthAdjust="spacingAndGlyphs">INFO@MODUNSOFT.COM</text><circle cx="1705.800" cy="439.700" r="8" fill="#1c2b50"/><circle cx="1705.800" cy="439.700" r="5.300" fill="none" stroke="#fff" stroke-width="1"/><ellipse cx="1705.800" cy="439.700" rx="2.300" ry="5.300" fill="none" stroke="#fff" stroke-width=".9"/><path d="M1700.500 439.700h10.600M1701.300 437h9M1701.300 442.400h9" stroke="#fff" stroke-width=".8"/><text x="1732.3" y="443.7" font-size="10.3" font-weight="400" fill="#9a4a50" textLength="79.2" lengthAdjust="spacingAndGlyphs">www.modungym.com</text></g></svg></aside><section class="panel" style="left:43px;top:502px;width:783px;height:320px"><h3 class="t" style="left:30.6px;top:24px;font-size:20px;line-height:20px;font-weight:400;color:#5b6b86;letter-spacing:0.42px;">Tình hình tài chính</h3><div class="btn" style="left:657px;top:22.5px;width:101px"></div><span class="t" style="left:675.7px;top:30px;font-size:15px;line-height:15px;font-weight:700;color:#3d4a5c;letter-spacing:0px;">CHI TIẾT</span><span class="t" style="left:37.6px;top:89px;font-size:17px;line-height:17px;font-weight:400;color:#6c757d;letter-spacing:0.11px;">Doanh số</span><span class="t" style="left:276px;top:89px;font-size:17px;line-height:17px;font-weight:400;color:#6c757d;letter-spacing:0.63px;">Doanh thu</span><span class="t" style="left:34.4px;top:122px;font-size:22px;line-height:22px;font-weight:400;color:#6c757d;letter-spacing:0.68px;">vnd</span><span class="t" style="left:75.3px;top:118px;font-size:27px;line-height:27px;font-weight:400;color:#4a5776;letter-spacing:0.26px;">163,090,000</span><span class="t" style="left:272.5px;top:122px;font-size:22px;line-height:22px;font-weight:400;color:#6c757d;letter-spacing:0.63px;">vnd</span><span class="t" style="left:313.7px;top:118px;font-size:27px;line-height:27px;font-weight:400;color:#4a5776;letter-spacing:0.32px;">163,084,839</span><i class="abs" style="left:280.4px;top:200.60000000000002px;width:44.6px;height:15.4px;background:#3e95cd"></i><span class="t" style="left:330px;top:202px;font-size:12px;line-height:12px;font-weight:400;color:#666;letter-spacing:0.3px;">Doanh số</span><i class="abs" style="left:393px;top:200.60000000000002px;width:44.8px;height:15.4px;background:#8e5ea2"></i><span class="t" style="left:443.3px;top:202px;font-size:12px;line-height:12px;font-weight:400;color:#666;letter-spacing:0.34px;">Doanh thu</span><svg style="left:102px;top:224px" width="636" height="2" viewBox="0 0 636 2"><path d="M0 1H636" stroke="#cfd0d6" stroke-width="1" stroke-dasharray="2 3.300"/></svg><span class="t" style="left:33px;top:219px;font-size:13px;line-height:13px;font-weight:400;color:#9799ae;letter-spacing:0.29px;">200,000k</span><span class="t" style="left:33px;top:290px;font-size:13px;line-height:13px;font-weight:400;color:#9799ae;letter-spacing:0.29px;">100,000k</span><i class="abs" style="left:108.69999999999999px;top:292px;width:7px;height:7px;border-radius:50%;background:#3e95cd"></i></section><section class="panel" style="left:850px;top:502px;width:550px;height:320px"><h3 class="t" style="left:25.3px;top:24px;font-size:20px;line-height:20px;font-weight:400;color:#5b6b86;letter-spacing:0.64px;">Member checkin trong ngày</h3><div class="btn" style="left:405px;top:22.5px;width:120px"></div><span class="t" style="left:423.8px;top:30px;font-size:15px;line-height:15px;font-weight:700;color:#3d4a5c;letter-spacing:0.35px;">XEM THÊM</span><div class="hr" style="left:25px;top:61.5px;width:500px"></div><span class="t" style="left:30.2px;top:95px;font-size:17px;line-height:17px;font-weight:700;color:#7b8aa5;letter-spacing:0.66px;">Mã thẻ</span><span class="t" style="left:188.4px;top:95px;font-size:17px;line-height:17px;font-weight:700;color:#7b8aa5;letter-spacing:-0.62px;">Tên</span><span class="t" style="left:346px;top:95px;font-size:17px;line-height:17px;font-weight:700;color:#7b8aa5;letter-spacing:-0.54px;">Giờ vào</span><span class="t" style="left:502.6px;top:95px;font-size:17px;line-height:17px;font-weight:700;color:#7b8aa5;letter-spacing:-0.58px;">Kh</span></section><section class="panel" style="left:1415px;top:478px;width:421px;height:340px"><h3 class="t" style="left:26px;top:23px;font-size:21px;line-height:21px;font-weight:400;color:#5b6b86;letter-spacing:-0.09px;">Tin tức</h3><div class="btn" style="left:276px;top:22px;width:120px"></div><span class="t" style="left:294.9px;top:30px;font-size:15px;line-height:15px;font-weight:700;color:#3d4a5c;letter-spacing:0.39px;">XEM THÊM</span><div class="hr" style="left:26px;top:62px;width:370px"></div><i class="abs" style="left:371.4000000000001px;top:63px;width:24px;height:270px;background:#f1f1f1"></i><i class="abs" style="left:373px;top:88px;width:20.6px;height:240px;background:#c1c1c1"></i><svg style="left:377.5px;top:73px" width="11" height="6" viewBox="0 0 11 6"><path d="M0 6L5.5 0 11 6z" fill="#a3a3a3"/></svg><a class="t" style="left:146.7px;top:111px;font-size:22px;line-height:22px;font-weight:400;color:#2a72c3;letter-spacing:-0.53px;">Top Các Cách Chọn</a><a class="t" style="left:145.7px;top:146px;font-size:22px;line-height:22px;font-weight:400;color:#2a72c3;letter-spacing:-0.22px;">Phòng Tập Tốt Nhất</a><span class="t" style="left:146.7px;top:181px;font-size:16px;line-height:16px;font-weight:400;color:#757575;letter-spacing:-0.61px;">2023-08-09 14:04:30</span><a class="t" style="left:146px;top:226px;font-size:22px;line-height:22px;font-weight:400;color:#2a72c3;letter-spacing:-0.53px;">Những Khó Khăn Và</a><a class="t" style="left:146px;top:260px;font-size:22px;line-height:22px;font-weight:400;color:#2a72c3;letter-spacing:-0.78px;">Sự Lựa Chọn Của Nhà</a><a class="t" style="left:147px;top:294px;font-size:22px;line-height:22px;font-weight:400;color:#2a72c3;letter-spacing:-0.84px;">Đầu Tư Về Công Ty</a><svg style="left:26px;top:95px" width="105" height="105" viewBox="1441 573 105 105"><defs><radialGradient id="tg1" cx=".52" cy=".62" r=".75"><stop offset="0" stop-color="#5a5a5a"/><stop offset=".45" stop-color="#383838"/><stop offset="1" stop-color="#0b0b0b"/></radialGradient><pattern id="dots" x="1441" y="574" width="3.100" height="3.100" patternUnits="userSpaceOnUse"><circle cx="1.500" cy="1.500" r=".55" fill="#9a9a9a"/></pattern><clipPath id="tc1"><rect x="1441" y="573" width="105" height="105"/></clipPath></defs><g clip-path="url(#tc1)"><rect x="1441" y="573" width="105" height="105" fill="url(#tg1)"/><rect x="1442" y="574" width="30" height="31" fill="url(#dots)" opacity=".8"/><path d="M1441 617C1447 613 1450 616 1453 610S1460 603 1465 606 1472 600 1476 594L1492 586" stroke="#7a7a7a" stroke-width="2.400" fill="none" stroke-linecap="round"/><ellipse cx="1461" cy="594" rx="7" ry="3.500" fill="#6f6f6f"/><ellipse cx="1461" cy="594" rx="2.500" ry="1.200" fill="#2a2a2a"/><ellipse cx="1485" cy="610" rx="13" ry="14" fill="#141414"/><ellipse cx="1493" cy="590" rx="12" ry="11.500" fill="#0c0c0c"/><ellipse cx="1488" cy="588" rx="6" ry="9" fill="#1d1d1d"/><path d="M1502 588L1509 585" stroke="#222" stroke-width="2.500"/><ellipse cx="1451" cy="660" rx="13" ry="11" fill="#4a4a4a"/><ellipse cx="1451" cy="660" rx="9" ry="7.500" fill="#2a2a2a"/><ellipse cx="1451" cy="660" rx="4" ry="3.300" fill="#555"/><ellipse cx="1446" cy="673" rx="11" ry="6" fill="#444"/><ellipse cx="1446" cy="673" rx="6" ry="3" fill="#222"/><g font-family="Liberation Serif, DejaVu Serif, serif" font-weight="700" font-size="9.800" fill="#f2f2f2"><text x="1453" y="623.200" textLength="81" lengthAdjust="spacingAndGlyphs">Top Các Cách Chọn</text><text x="1450.800" y="635.400" textLength="83" lengthAdjust="spacingAndGlyphs">Phòng Tập Tốt Nhất</text></g><g fill="#f2f2f2"><rect x="1486" y="645.300" width="15.500" height="1.600"/><rect x="1482.700" y="641.500" width="2" height="9.200" rx=".8"/><rect x="1485.200" y="640.600" width="2.200" height="11" rx=".8"/><rect x="1500.200" y="640.600" width="2.200" height="11" rx=".8"/><rect x="1502.900" y="641.500" width="2" height="9.200" rx=".8"/><rect x="1481.200" y="644.300" width="1.200" height="3.600"/><rect x="1505.200" y="644.300" width="1.200" height="3.600"/><rect x="1531" y="581.200" width="9.500" height="1.500"/><rect x="1528" y="579" width="1.500" height="6" rx=".6"/><rect x="1530" y="578.200" width="1.800" height="7.600" rx=".6"/><rect x="1539.700" y="578.200" width="1.800" height="7.600" rx=".6"/><rect x="1542" y="579" width="1.500" height="6" rx=".6"/></g><rect x="1441" y="670.100" width="105" height="8" fill="#a81f26"/><rect x="1441" y="670.100" width="25" height="8" fill="#f4f4f4"/><path d="M1443.500 672L1447.500 674.200 1443.500 676.400z" fill="#b5202a"/><rect x="1442.300" y="672" width="1.200" height="4.400" fill="#3a2a02"/><rect x="1449" y="673.100" width="9" height="2.200" fill="#2a2a2a"/><rect x="1458.500" y="673.100" width="5.500" height="2.200" fill="#b5202a"/><rect x="1469" y="673.600" width="25" height="1" fill="#e6b9bb"/><rect x="1524" y="675" width="19" height=".9" fill="#d99a9d"/></g></svg><svg style="left:26px;top:261px" width="105" height="70" viewBox="1441 739 105 70"><defs><clipPath id="tc2"><rect x="1441" y="739" width="105" height="70"/></clipPath></defs><g clip-path="url(#tc2)"><rect x="1441" y="739" width="105" height="70" fill="#f3f1ec"/><g transform="translate(1483.9 764.3) rotate(-26.5)"><rect x="-14.5" y="-20.75" width="29" height="41.5" rx="2.400" fill="#0a0a0a"/><rect x="-12.8" y="-19.05" width="25.6" height="38.1" rx="1.300" fill="#d3dbde"/><rect x="-12.8" y="-19.05" width="14.080000000000002" height="15.240000000000002" fill="#eef0f0"/><path d="M-12.8 4.571999999999999L12.8 0.0V18.05Q12.8 19.05 11.8 19.05H-11.8Q-12.8 19.05 -12.8 18.05z" fill="#c98d58"/><path d="M5.631999999999998 -6.477l6.656000000000001 0 0 8.382 -5.120000000000001 0z" fill="#d9a56c"/><g transform="rotate(8)"><rect x="-7.68" y="-7.620000000000001" width="15.872" height="9.906" fill="#b9bcc4" stroke="#555a60" stroke-width=".9"/><path d="M-8.704 2.8575h17.919999999999998l1.536 4.572h-20.992z" fill="#8e9196"/><rect x="-3.072" y="-3.429" width="6.656000000000001" height="1" fill="#e0a070"/></g></g><g transform="translate(1527 794.3) rotate(-26)"><rect x="-12.75" y="-18.5" width="25.5" height="37" rx="2.400" fill="#0a0a0a"/><rect x="-11.05" y="-16.8" width="22.1" height="33.6" rx="1.300" fill="#cdb49d"/><rect x="-11.05" y="-16.8" width="22.1" height="7.392" fill="#4a4640"/><rect x="-1.1050000000000004" y="-16.8" width="12.155000000000001" height="6.720000000000001" fill="#e9ebe8"/><rect x="-10.05" y="-10.752" width="6.63" height="13.440000000000001" rx="1" fill="#e8eef5"/><rect x="-1.7680000000000007" y="-10.08" width="11.05" height="5.376" fill="#f1eee6"/><rect x="-1.1050000000000004" y="-5.712" width="11.05" height="1.400" fill="#e4c13a"/><rect x="-4.420000000000001" y="-0.6720000000000006" width="11.05" height="6.720000000000001" fill="#eceae6"/></g><g transform="translate(1468 811) rotate(-26.5)"><rect x="-14.5" y="-20.75" width="29" height="41.5" rx="2.400" fill="#0a0a0a"/><rect x="-12.8" y="-19.05" width="25.6" height="38.1" rx="1.300" fill="#c9a58a"/><rect x="-12.8" y="-19.05" width="25.6" height="4.572" fill="#e8e4de"/></g></g></svg></section><a class="abs" style="left:36px;top:703px;width:66px;height:66px;border-radius:50%;background:#b02020;box-shadow:0 3px 12px rgba(0,0,0,.22)"><svg style="left:0;top:0" width="66" height="66" viewBox="36 703 66 66"><circle cx="68.700" cy="735.800" r="16.800" fill="#fff"/><path d="M56.800 747.500L58.300 754.200 65 751.500z" fill="#fff"/><path d="M58.600 741.800L65.200 731.600 71.500 736.400 79.400 731.200 72.800 741.200 66.500 736.600z" fill="#b02020" stroke="#b02020" stroke-width=".8" stroke-linejoin="round"/></svg></a><div class="abs" style="left:0;top:798px;width:1895px;height:4px;background:linear-gradient(90deg,#22343c 0,#23363f 50%,#2a3b4d 80%,#2c3d50 100%)"></div><div class="abs" style="left:72px;top:798px;width:516px;height:4px;background:#f0f0f0;border-top:1px solid #b4b4b4;border-left:1px solid #b4b4b4"></div><div class="abs" style="left:737px;top:798px;width:73px;height:4px;background:#4c5b62"></div>
</body>
</html>
